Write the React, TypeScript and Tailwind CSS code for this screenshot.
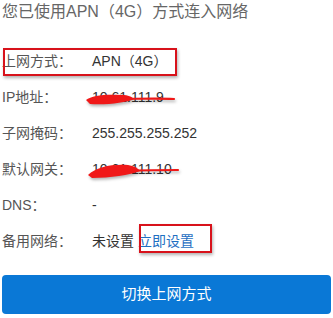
const rows: { label: string; value: string; hidden?: 'ip' | 'gw' }[] = [
  { label: '上网方式：', value: 'APN（4G）' },
  { label: 'IP地址：', value: '10.61.111.9', hidden: 'ip' },
  { label: '子网掩码：', value: '255.255.255.252' },
  { label: '默认网关：', value: '10.61.111.10', hidden: 'gw' },
  { label: 'DNS：', value: '-' },
]

function Scribble({ kind }: { kind: 'ip' | 'gw' }) {
  // hand drawn red marker over the hidden address
  const blob =
    kind === 'ip'
      ? 'M0 12 C6 7, 20 6, 36 7 C42 7, 46 9, 48 11 C40 15, 20 17, 4 16 Z'
      : 'M2 15 C10 7, 26 4, 42 5 C48 6, 52 8, 54 11 C44 15, 24 18, 6 18 Z'
  const line = kind === 'ip' ? 'M30 11 C50 11, 70 10, 88 11' : 'M36 11 C52 10, 70 10, 92 10'
  return (
    <svg
      className="pointer-events-none absolute left-[-6px] top-[1px]"
      width="100"
      height="24"
      viewBox="0 0 100 24"
      style={{ filter: 'drop-shadow(1px 2px 1.5px rgba(0,0,0,0.3))' }}
    >
      <path d={blob} fill="#f01818" />
      <path d={line} fill="none" stroke="#f01818" strokeWidth="2.2" strokeLinecap="round" />
    </svg>
  )
}

export default function App() {
  return (
    <div
      className="relative h-[318px] w-[333px] bg-white px-[2px] text-[14px]"
      style={{ fontFamily: '"Liberation Sans", "Noto Sans CJK SC", sans-serif' }}
    >
      <div className="pt-[1px] text-[16px] leading-[22px] text-[#666]">您已使用APN（4G）方式连入网络</div>
      <div className="mt-[20px] flex flex-col">
        {rows.map((row) => (
          <div key={row.label} className="flex h-[36px] items-center">
            <span className="w-[90px] text-[#555]">{row.label}</span>
            <span className="relative text-[#333]">
              {row.value}
              {row.hidden && <Scribble kind={row.hidden} />}
            </span>
          </div>
        ))}
        <div className="flex h-[36px] items-center">
          <span className="w-[90px] text-[#555]">备用网络：</span>
          <span className="text-[#333]">未设置</span>
          <a className="ml-[4px] text-[#1f6fc2]">立即设置</a>
        </div>
      </div>
      <button
        type="button"
        className="mt-[16px] flex h-[39px] w-full items-center justify-center rounded-[4px] bg-[#0a78d6] text-[15px] text-white"
      >
        切换上网方式
      </button>

      {/* annotation boxes */}
      <div className="pointer-events-none absolute left-[3px] top-[48px] h-[28px] w-[174px] border-2 border-[#d8121b] shadow-[1px_2px_3px_rgba(0,0,0,0.3)]" />
      <div className="pointer-events-none absolute left-[139px] top-[224px] h-[29px] w-[73px] border-2 border-[#d8121b] shadow-[1px_2px_3px_rgba(0,0,0,0.3)]" />
    </div>
  )
}
